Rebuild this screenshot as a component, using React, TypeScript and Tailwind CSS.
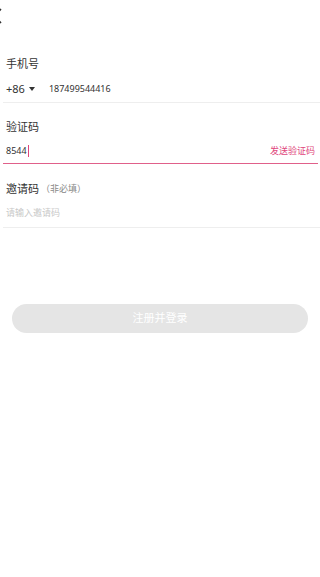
export default function App() {
  return (
    <div
      className="w-[320px] h-[577px] bg-white relative overflow-hidden"
      style={{ fontFamily: '"Noto Sans", "Noto Sans CJK SC", sans-serif' }}
    >
      {/* back chevron, mostly cut off */}
      <svg className="absolute left-[-9px] top-[8px]" width="12" height="16" viewBox="0 0 12 16" fill="none" stroke="#333" strokeWidth="1.6">
        <path d="M10 1L3 8l7 7" />
      </svg>

      <div className="pt-[56px] pl-[3px]">
        {/* phone */}
        <div className="pl-[3px] text-[11px] leading-[16px] text-[#333]">手机号</div>
        <div className="mt-[9px] h-[22px] flex items-center border-b border-[#eeeeee] pb-[5px]">
          <div className="pl-[3px] flex items-center text-[11px] text-[#333]">
            +86
            <svg className="ml-[4px]" width="6" height="4" viewBox="0 0 6 4">
              <path d="M0 0h6L3 4z" fill="#333" />
            </svg>
          </div>
          <div className="ml-[14px] text-[9px] text-[#333]">187499544416</div>
        </div>

        {/* code */}
        <div className="mt-[16px] pl-[3px] text-[11px] leading-[16px] text-[#333]">验证码</div>
        <div className="mt-[8px] mr-[2px]">
          <div className="h-[16px] flex items-center justify-between">
            <div className="pl-[3px] flex items-center text-[9px] text-[#333]">
              8544
              <span className="ml-[1px] w-[1.5px] h-[12px] bg-[#e0457b]" />
            </div>
            <div className="pr-[3px] text-[9px] text-[#e0457b]">发送验证码</div>
          </div>
          <div className="mt-[4px] h-[1px] bg-[#e0608a]" />
        </div>

        {/* invite */}
        <div className="mt-[17px] pl-[3px] flex items-center text-[11px] leading-[16px] text-[#333]">
          邀请码<span className="ml-[2px] text-[9px] text-[#888]">（非必填）</span>
        </div>
        <div className="mt-[8px] h-[23px] flex items-center border-b border-[#eeeeee] pb-[6px]">
          <div className="pl-[3px] text-[9px] text-[#c8c8c8]">请输入邀请码</div>
        </div>

        <div className="mt-[76px] ml-[9px] w-[296px] h-[29px] rounded-full bg-[#e5e5e5] flex items-center justify-center text-[11px] text-white">
          注册并登录
        </div>
      </div>
    </div>
  );
}
